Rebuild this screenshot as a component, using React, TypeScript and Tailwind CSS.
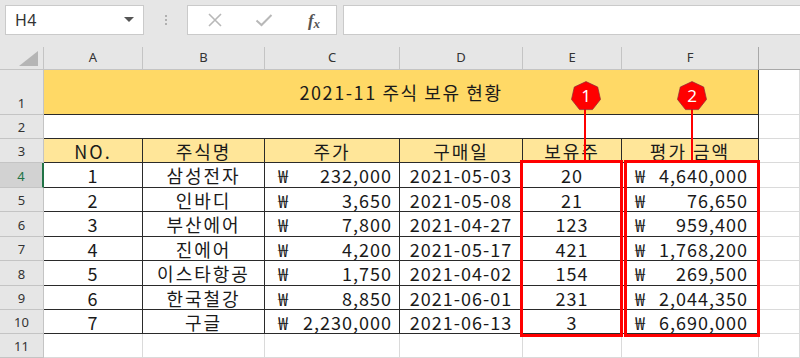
import React from "react";

const rows = [
  ["1", "삼성전자", "232,000", "2021-05-03", "20", "4,640,000"],
  ["2", "인바디", "3,650", "2021-05-08", "21", "76,650"],
  ["3", "부산에어", "7,800", "2021-04-27", "123", "959,400"],
  ["4", "진에어", "4,200", "2021-05-17", "421", "1,768,200"],
  ["5", "이스타항공", "1,750", "2021-04-02", "154", "269,500"],
  ["6", "한국철강", "8,850", "2021-06-01", "231", "2,044,350"],
  ["7", "구글", "2,230,000", "2021-06-13", "3", "6,690,000"],
];

const rh =
  "flex items-end justify-center pb-[3px] bg-[#e6e6e6] border-r border-b border-[#c4c4c4] text-[13px] leading-[16px] text-[#333] font-['Noto_Sans',sans-serif]";
const dark = "border-r border-b border-[#2a2a2a]";
const cellText = "text-[18px] leading-[22px] text-[#1a1a1a] font-['Noto_Sans_CJK_KR',sans-serif]";
const grid = "border-r border-b border-[#dadada] bg-white";

function Marker({ n }: { n: string }) {
  return (
    <div className="relative w-[30px] h-[30px]">
      <svg width="30" height="30" viewBox="0 0 30 30" className="absolute inset-0">
        <polygon
          points="15,0.6 26.7,6 29.5,18.4 21.5,28.6 8.5,28.6 0.5,18.4 3.3,6"
          fill="#ff0000"
          stroke="#8a2a3a"
          strokeWidth="0.7"
        />
      </svg>
      <div className="absolute inset-0 flex items-center justify-center pb-[1px] text-white text-[17px] font-['Noto_Sans',sans-serif]">
        {n}
      </div>
    </div>
  );
}

export default function App() {
  return (
    <div className="w-[800px] h-[358px] overflow-hidden bg-[#e6e6e6] select-none">
      {/* Toolbar */}
      <div className="h-[47px] flex items-start pt-[5px] pl-[5px] gap-0">
        <div className="w-[139px] h-[30px] bg-white border border-[#cacaca] flex items-center justify-between pl-[9px] pr-[9px]">
          <span className="text-[16px] text-[#333] font-['Noto_Sans',sans-serif] tracking-[0.5px]">H4</span>
          <svg width="10" height="6" viewBox="0 0 10 6">
            <polygon points="0,0 10,0 5,5" fill="#555" />
          </svg>
        </div>
        <div className="w-[43px] h-[30px] flex flex-col items-center justify-center gap-[2px]">
          <div className="w-[2px] h-[2px] bg-[#b0b0b0]" />
          <div className="w-[2px] h-[2px] bg-[#b0b0b0]" />
          <div className="w-[2px] h-[2px] bg-[#b0b0b0]" />
        </div>
        <div className="w-[150px] h-[30px] bg-white border border-[#cacaca] flex items-center">
          <div className="w-[50px] flex justify-center pl-[3px]">
            <svg width="16" height="14" viewBox="0 0 16 14">
              <path d="M2 1 L14 13 M14 1 L2 13" stroke="#b8b8b8" strokeWidth="1.6" fill="none" />
            </svg>
          </div>
          <div className="w-[48px] flex justify-center pl-[4px]">
            <svg width="18" height="14" viewBox="0 0 18 14">
              <path d="M1.5 7.5 L6.5 12 L16.5 2" stroke="#b8b8b8" strokeWidth="2" fill="none" />
            </svg>
          </div>
          <div className="w-[50px] flex justify-center pl-[6px]">
            <span className="italic text-[#555] font-['Liberation_Serif',serif] text-[17px] font-bold leading-none">
              f<span className="text-[13px] relative top-[2px]">x</span>
            </span>
          </div>
        </div>
        <div className="ml-[6px] flex-1 h-[30px] bg-white border-t border-b border-l border-[#cacaca]" />
      </div>

      {/* Sheet */}
      <div className="relative">
        <div className="grid grid-cols-[44px_99px_122px_135px_123px_99px_137px_41px] grid-rows-[23px_45px_24px_24px_25px_24px_25px_24px_25px_24px_24px_24px]">
          {/* column headers */}
          <div className="bg-[#e6e6e6] border-r border-b border-[#c4c4c4] flex items-end justify-end pr-[5px] pb-[3px]">
            <svg width="19" height="15" viewBox="0 0 19 15">
              <polygon points="19,0 19,15 0,15" fill="#b5b5b5" />
            </svg>
          </div>
          {["A", "B", "C", "D", "E", "F"].map((c) => (
            <div
              key={c}
              className="bg-[#e6e6e6] border-r border-b border-[#c4c4c4] flex items-center justify-center text-[13px] text-[#333] font-['Noto_Sans',sans-serif]"
            >
              {c}
            </div>
          ))}
          <div className="bg-[#e6e6e6] border-l border-b border-[#a8a8a8] -ml-[1px]" />

          {/* row 1 */}
          <div className={rh}>1</div>
          <div className={`col-span-6 bg-[#ffd966] ${dark} flex items-center justify-center ${cellText} tracking-[1.6px]`}>
            2021-11 주식 보유 현황
          </div>
          <div className={grid} />

          {/* row 2 */}
          <div className={rh}>2</div>
          <div className={`col-span-6 bg-white ${dark}`} />
          <div className={grid} />

          {/* row 3 */}
          <div className={rh}>3</div>
          {["NO.", "주식명", "주가", "구매일", "보유주", "평가 금액"].map((h) => (
            <div
              key={h}
              className={`bg-[#ffe699] ${dark} flex items-center justify-center ${cellText} tracking-[2px]`}
            >
              {h}
            </div>
          ))}
          <div className={grid} />

          {/* data rows */}
          {rows.map((r, i) => (
            <React.Fragment key={r[0]}>
              {i === 0 ? (
                <div className="flex items-end justify-center pb-[3px] bg-[#d2d2d2] border-r-2 border-r-[#217346] border-b border-b-[#c4c4c4] text-[13px] leading-[16px] text-[#217346] font-['Noto_Sans',sans-serif]">
                  {String(i + 4)}
                </div>
              ) : (
                <div className={rh}>{String(i + 4)}</div>
              )}
              <div className={`bg-white ${dark} flex items-center justify-center ${cellText} tracking-[1px]`}>
                {r[0]}
              </div>
              <div className={`bg-white ${dark} flex items-center justify-center ${cellText} tracking-[2px]`}>
                {r[1]}
              </div>
              <div className={`bg-white ${dark} flex items-center justify-between pl-[13px] pr-[7px] ${cellText} tracking-[1px]`}>
                <span>₩</span>
                <span>{r[2]}</span>
              </div>
              <div className={`bg-white ${dark} flex items-center justify-center ${cellText} tracking-[1px]`}>
                {r[3]}
              </div>
              <div className={`bg-white ${dark} flex items-center justify-center ${cellText} tracking-[1px]`}>
                {r[4]}
              </div>
              <div className={`bg-white ${dark} flex items-center justify-between pl-[13px] pr-[10px] ${cellText} tracking-[1px]`}>
                <span>₩</span>
                <span>{r[5]}</span>
              </div>
              <div className={grid} />
            </React.Fragment>
          ))}

          {/* row 11 */}
          <div className={rh}>11</div>
          {[0, 1, 2, 3, 4, 5, 6].map((k) => (
            <div key={k} className={grid} />
          ))}
        </div>

        {/* annotations overlay */}
        <div className="absolute left-[520px] top-[113px] w-[103px] h-[177px] border-[3px] border-[#ff0000]" />
        <div className="absolute left-[624px] top-[113px] w-[136px] h-[177px] border-[3px] border-[#ff0000]" />
        <div className="absolute left-[584px] top-[60px] w-[2px] h-[54px] bg-[#ff0000]" />
        <div className="absolute left-[691px] top-[60px] w-[2px] h-[54px] bg-[#ff0000]" />
        <div className="absolute left-[571px] top-[34px]">
          <Marker n="1" />
        </div>
        <div className="absolute left-[677px] top-[34px]">
          <Marker n="2" />
        </div>
      </div>
    </div>
  );
}
